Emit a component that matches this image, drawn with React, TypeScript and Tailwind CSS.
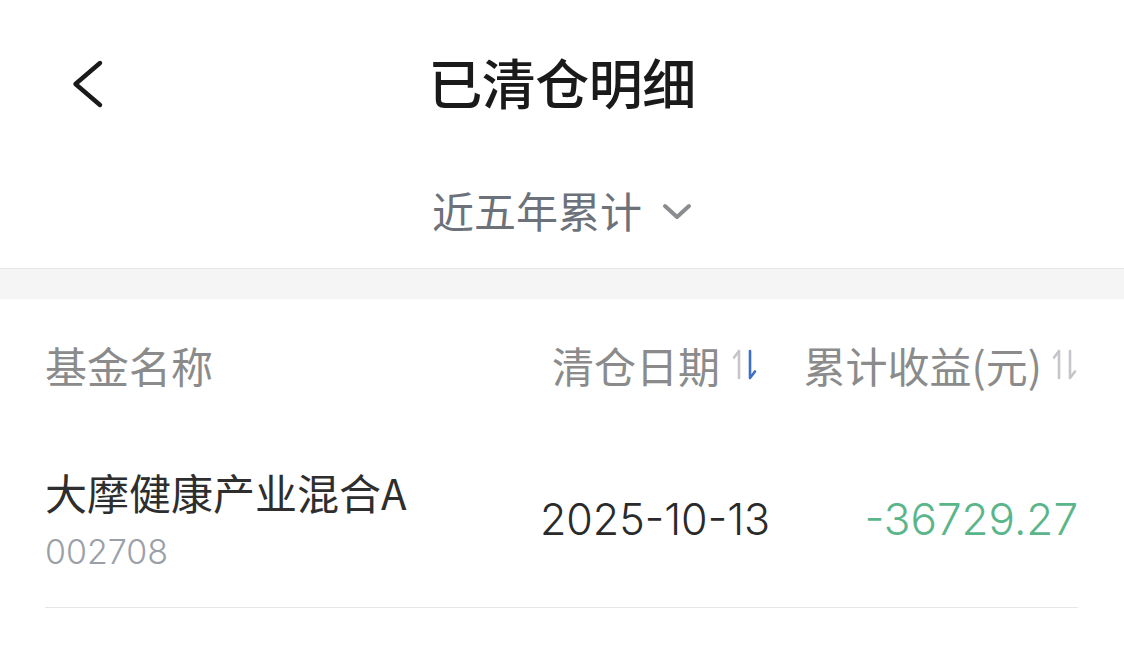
function SortIcon({ active }: { active?: boolean }) {
  return (
    <svg width="28" height="34" viewBox="0 0 28 34" fill="none" strokeLinecap="round" strokeLinejoin="round" strokeWidth="2.6">
      <path d="M9 3 L9 30 M9 3 L4 9.5" stroke="#c6c6ca" />
      <path d="M20 3 L20 30 M20 30 L25 23.5" stroke={active ? '#3f6fc8' : '#c6c6ca'} />
    </svg>
  )
}

const cjk = "font-['Noto_Sans_CJK_SC','Noto_Sans',sans-serif]"
const num = "font-['Inter','Noto_Sans_CJK_SC',sans-serif]"

export default function App() {
  return (
    <div className={`w-[1124px] h-[647px] overflow-hidden bg-white ${cjk}`}>
      {/* nav bar */}
      <div className="relative h-[164px] flex items-center justify-center">
        <button className="absolute left-[70px] top-[59px] w-[36px] h-[50px] flex items-center justify-center">
          <svg width="36" height="50" viewBox="0 0 36 50" fill="none">
            <path d="M30 4 L5.5 25 L30 46" stroke="#1a1a1a" strokeWidth="4.4" strokeLinecap="round" strokeLinejoin="round" />
          </svg>
        </button>
        <h1 className="text-[54px] leading-none font-medium text-[#1a1a1a] tracking-[-0.5px]">已清仓明细</h1>
      </div>

      {/* range filter */}
      <div className="h-[105px] pb-[12px] flex items-center justify-center border-b border-[#e6e6e6]">
        <span className="text-[42px] leading-none text-[#6c717a]">近五年累计</span>
        <svg className="ml-[20px] mt-[2px]" width="30" height="20" viewBox="0 0 30 20" fill="none">
          <path d="M3 5 L15 16 L27 5" stroke="#8a8c90" strokeWidth="4" strokeLinecap="round" strokeLinejoin="round" />
        </svg>
      </div>
      <div className="h-[30px] bg-[#f5f5f5]" />

      {/* table header */}
      <div className="h-[132px] pl-[45px] pr-[46px] grid grid-cols-[1fr_240px_303px] items-center text-[42px] leading-none text-[#8b8b8b]">
        <span>基金名称</span>
        <div className="flex items-center justify-center gap-[10px]">
          <span>清仓日期</span>
          <SortIcon active />
        </div>
        <div className="flex items-center justify-end gap-[8px]">
          <span>累计收益(元)</span>
          <SortIcon />
        </div>
      </div>

      {/* rows */}
      <div className="ml-[45px] mr-[46px] border-b border-[#e6e6e6]">
        <div className="h-[176px] grid grid-cols-[1fr_240px_303px] items-center">
          <div className="flex flex-col pt-[4px]">
            <span className="text-[42px] leading-[50px] text-[#2e2e2e]">大摩健康产业混合A</span>
            <span className={`${num} font-light mt-[12px] text-[34px] leading-[46px] text-[#9ba0a8]`}>002708</span>
          </div>
          <span className={`${num} font-light text-center text-[43px] leading-none text-[#2a2a2a]`}>2025-10-13</span>
          <span className={`${num} font-light text-right text-[44px] leading-none text-[#5bb58b]`}>-36729.27</span>
        </div>
      </div>
    </div>
  )
}
